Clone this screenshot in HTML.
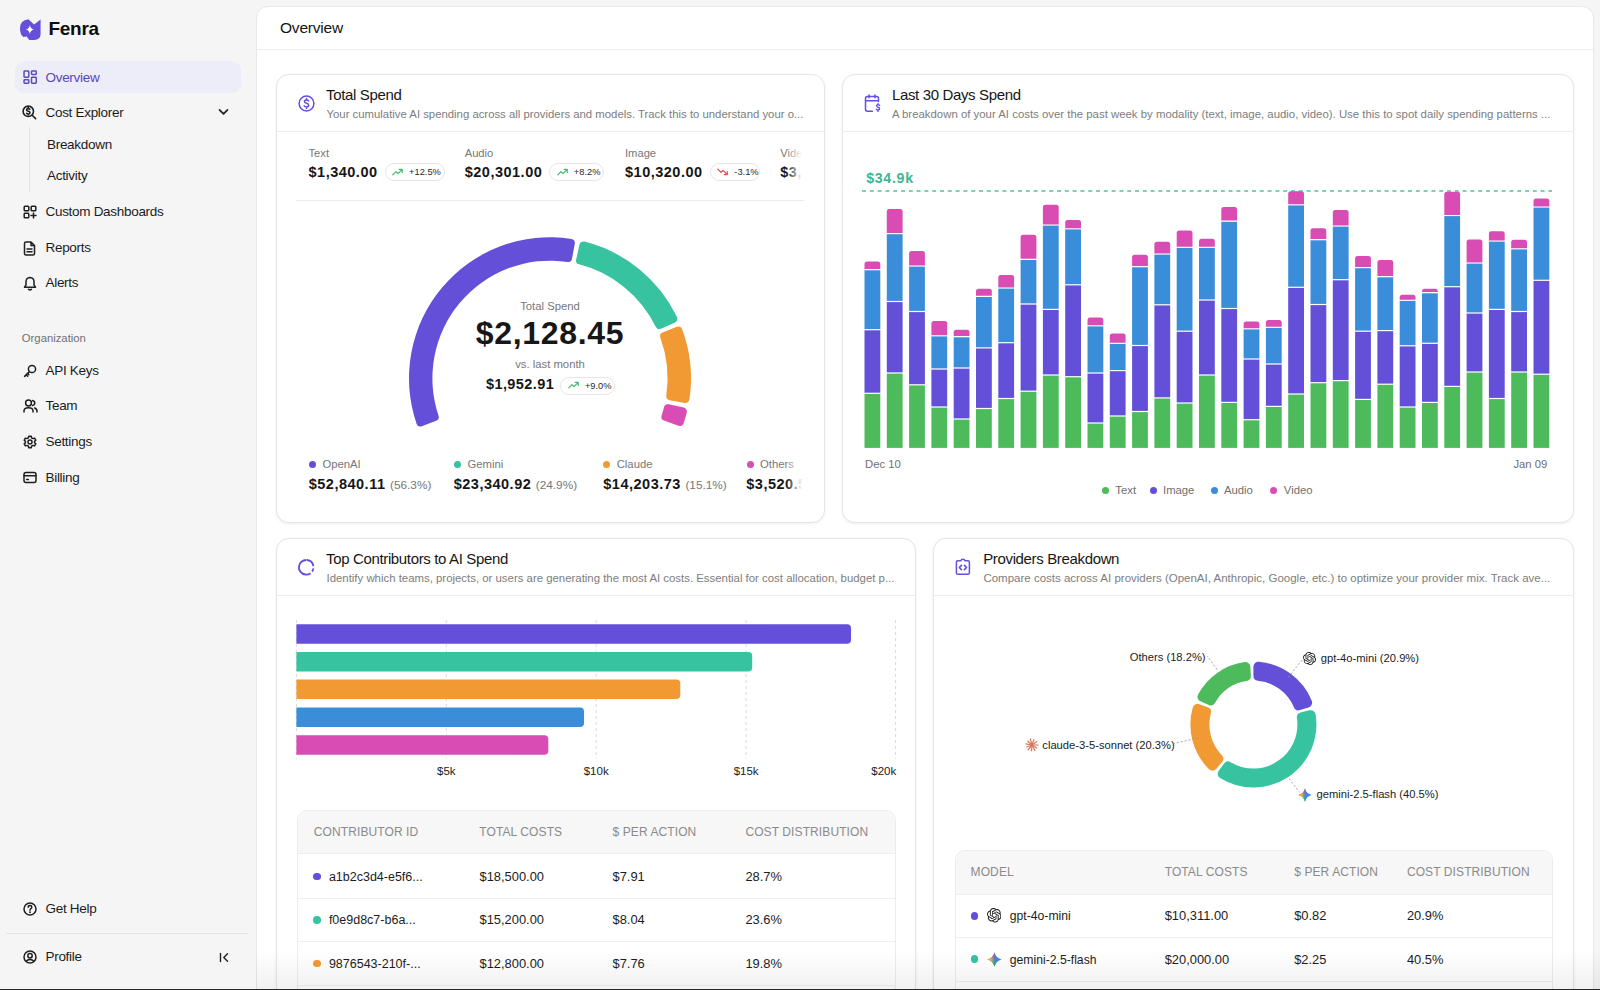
<!DOCTYPE html>
<html><head><meta charset="utf-8">
<style>
*{box-sizing:border-box;margin:0;padding:0}
html,body{width:1600px;height:990px;overflow:hidden;background:#f5f5f5;font-family:"Liberation Sans",sans-serif;color:#1a1a1a}
.a{position:absolute;white-space:nowrap}
svg.i{position:absolute;fill:none;stroke:#1f1f1f;stroke-width:1.6;stroke-linecap:round;stroke-linejoin:round}
.nav{position:absolute;left:45.5px;font-size:13.5px;letter-spacing:-0.3px;line-height:16px;color:#1c1c1c;white-space:nowrap}
#main{position:absolute;left:256px;top:6px;width:1338px;height:1000px;background:#fff;border:1px solid #e9e9e9;border-radius:12px;overflow:hidden}
.card{position:absolute;background:#fff;border:1px solid #e6e6e6;border-radius:13px;box-shadow:0 1px 3px rgba(0,0,0,.07);overflow:hidden}
.hd{position:absolute;left:0;right:0;top:0;border-bottom:1px solid #ececec}
.ttl{position:absolute;font-size:15px;letter-spacing:-0.35px;line-height:18px;color:#161616;white-space:nowrap}
.dsc{position:absolute;font-size:11.3px;letter-spacing:0px;line-height:14px;color:#7a7a7a;white-space:nowrap}
</style></head><body>

<div class="a" style="left:256px;top:6px;width:1338px;height:1000px;background:#fff;border:1px solid #e8e8e8;border-radius:12px"></div>
<div class="a" style="left:257px;top:49px;width:1336px;height:1px;background:#ebebeb"></div>
<div class="a" style="left:280px;top:17.83px;font-size:15.5px;line-height:20px;color:#141414;font-weight:400;letter-spacing:-0.2px;">Overview</div>
<div class="card" style="left:276px;top:74px;width:548.5px;height:448.5px"></div>
<div class="a" style="left:277px;top:131px;width:546.5px;height:1px;background:#ececec"></div>
<svg class="i" style="left:297.5px;top:94.5px;stroke:#6450d8;stroke-width:1.5" width="17" height="17" viewBox="0 0 17 17"><circle cx="8.5" cy="8.5" r="7.4"/><path d="M10.6 5.9 Q10 5 8.5 5 Q6.4 5 6.4 6.6 Q6.4 7.8 8.5 8.3 Q10.7 8.8 10.7 10.2 Q10.7 11.9 8.5 11.9 Q7 11.9 6.2 10.9 M8.5 3.6 V5 M8.5 11.9 V13.4"/></svg>
<div class="a" style="left:326px;top:85.20px;font-size:15px;line-height:20px;color:#161616;font-weight:400;letter-spacing:-0.35px;">Total Spend</div>
<div class="a" style="left:326.5px;top:107.37px;font-size:11.35px;line-height:15px;color:#7d7d7d;font-weight:400;letter-spacing:0px;">Your cumulative AI spending across all providers and models. Track this to understand your o...</div>
<div class="a" style="left:296px;top:140px;width:508px;height:55px;overflow:hidden">
<div class="a" style="left:12.5px;top:6.02px;font-size:11.2px;line-height:15px;color:#777;font-weight:400;letter-spacing:0px;">Text</div>
<div class="a" style="left:12.5px;top:22.98px;font-size:14.5px;line-height:19px;color:#161616;font-weight:700;letter-spacing:0.5px;">$1,340.00</div>
<div class="a" style="left:88.60000000000002px;top:23.400000000000006px;width:60px;height:18px;border:1px solid #e6e6e6;border-radius:9.0px"></div>
<svg class="i" style="left:96.10000000000002px;top:28.100000000000005px;stroke:#3fba6a;stroke-width:1.2" width="11" height="8" viewBox="0 0 11 8"><path d="M0.8 6.8 L4 3.6 L6 5.6 L10 1.6 M7.2 1.4 H10.2 V4.4"/></svg><div class="a" style="left:113.10000000000002px;top:26.48px;font-size:9.3px;line-height:12px;color:#2a2a2a;font-weight:400;letter-spacing:0px;">+12.5%</div>
<div class="a" style="left:168.7px;top:6.02px;font-size:11.2px;line-height:15px;color:#777;font-weight:400;letter-spacing:0px;">Audio</div>
<div class="a" style="left:168.7px;top:22.98px;font-size:14.5px;line-height:19px;color:#161616;font-weight:700;letter-spacing:0.5px;">$20,301.00</div>
<div class="a" style="left:253.29999999999995px;top:23.400000000000006px;width:55px;height:18px;border:1px solid #e6e6e6;border-radius:9.0px"></div>
<svg class="i" style="left:260.79999999999995px;top:28.100000000000005px;stroke:#3fba6a;stroke-width:1.2" width="11" height="8" viewBox="0 0 11 8"><path d="M0.8 6.8 L4 3.6 L6 5.6 L10 1.6 M7.2 1.4 H10.2 V4.4"/></svg><div class="a" style="left:277.79999999999995px;top:26.48px;font-size:9.3px;line-height:12px;color:#2a2a2a;font-weight:400;letter-spacing:0px;">+8.2%</div>
<div class="a" style="left:329px;top:6.02px;font-size:11.2px;line-height:15px;color:#777;font-weight:400;letter-spacing:0px;">Image</div>
<div class="a" style="left:329px;top:22.98px;font-size:14.5px;line-height:19px;color:#161616;font-weight:700;letter-spacing:0.5px;">$10,320.00</div>
<div class="a" style="left:413.79999999999995px;top:23.400000000000006px;width:50.5px;height:18px;border:1px solid #e6e6e6;border-radius:9.0px"></div>
<svg class="i" style="left:421.29999999999995px;top:28.100000000000005px;stroke:#e0474c;stroke-width:1.2" width="11" height="8" viewBox="0 0 11 8"><path d="M0.8 1.2 L4 4.4 L6 2.4 L10 6.4 M7.2 6.6 H10.2 V3.6"/></svg><div class="a" style="left:438.29999999999995px;top:26.48px;font-size:9.3px;line-height:12px;color:#2a2a2a;font-weight:400;letter-spacing:0px;">-3.1%</div>
<div class="a" style="left:484.29999999999995px;top:6.02px;font-size:11.2px;line-height:15px;color:#777;font-weight:400;letter-spacing:0px;">Video</div>
<div class="a" style="left:484.29999999999995px;top:22.98px;font-size:14.5px;line-height:19px;color:#161616;font-weight:700;letter-spacing:0.5px;">$3,120.00</div>
<div class="a" style="left:564px;top:23.400000000000006px;width:55px;height:18px;border:1px solid #e6e6e6;border-radius:9.0px"></div>
<svg class="i" style="left:571.5px;top:28.100000000000005px;stroke:#3fba6a;stroke-width:1.2" width="11" height="8" viewBox="0 0 11 8"><path d="M0.8 6.8 L4 3.6 L6 5.6 L10 1.6 M7.2 1.4 H10.2 V4.4"/></svg><div class="a" style="left:588.5px;top:26.48px;font-size:9.3px;line-height:12px;color:#2a2a2a;font-weight:400;letter-spacing:0px;">+4.0%</div>
<div class="a" style="left:490px;top:0;width:18px;height:55px;background:linear-gradient(90deg,rgba(255,255,255,0),#fff 90%)"></div>
</div>
<div class="a" style="left:296px;top:200px;width:508px;height:1px;background:#ebebeb"></div>
<svg class="a" style="left:0;top:0" width="1600" height="990"><path fill="#6450d8" d="M421.73,426.26 A4,4,0,0,1,416.54,423.80 A141,141,0,0,1,571.47,238.94 A4,4,0,0,1,574.80,243.62 L572.01,258.77 A4,4,0,0,1,567.48,262.01 A117.6,117.6,0,0,0,438.55,415.84 A4,4,0,0,1,436.16,420.86Z"/><path fill="#37c39f" d="M579.48,244.57 A4,4,0,0,1,584.36,241.55 A141,141,0,0,1,676.99,317.03 A4,4,0,0,1,675.02,322.42 L660.96,328.71 A4,4,0,0,1,655.73,326.81 A117.6,117.6,0,0,0,579.08,264.35 A4,4,0,0,1,576.16,259.62Z"/><path fill="#f19a34" d="M676.90,326.82 A4,4,0,0,1,682.15,329.13 A141,141,0,0,1,689.39,399.58 A4,4,0,0,1,684.71,402.91 L669.56,400.14 A4,4,0,0,1,666.32,395.62 A117.6,117.6,0,0,0,660.37,337.70 A4,4,0,0,1,662.62,332.61Z"/><path fill="#d94cb3" d="M683.77,407.60 A4,4,0,0,1,686.80,412.47 A141,141,0,0,1,683.61,423.34 A4,4,0,0,1,678.44,425.81 L663.99,420.46 A4,4,0,0,1,661.58,415.45 A117.6,117.6,0,0,0,663.99,407.22 A4,4,0,0,1,668.72,404.30Z"/></svg>
<div class="a" style="left:350px;width:400px;text-align:center;top:299.18px;font-size:11.3px;line-height:15px;color:#777;font-weight:400;letter-spacing:0px;">Total Spend</div>
<div class="a" style="left:350px;width:400px;text-align:center;top:312.41px;font-size:32px;line-height:42px;color:#171717;font-weight:700;letter-spacing:0.7px;">$2,128.45</div>
<div class="a" style="left:350px;width:400px;text-align:center;top:356.88px;font-size:11.3px;line-height:15px;color:#777;font-weight:400;letter-spacing:0px;">vs. last month</div>
<div class="a" style="left:486px;top:375.38px;font-size:14.5px;line-height:19px;color:#161616;font-weight:700;letter-spacing:0.4px;">$1,952.91</div>
<div class="a" style="left:560.4px;top:376.7px;width:54.5px;height:18px;border:1px solid #e6e6e6;border-radius:9.0px"></div>
<svg class="i" style="left:567.9px;top:381.4px;stroke:#3fba6a;stroke-width:1.2" width="11" height="8" viewBox="0 0 11 8"><path d="M0.8 6.8 L4 3.6 L6 5.6 L10 1.6 M7.2 1.4 H10.2 V4.4"/></svg><div class="a" style="left:584.9px;top:379.78px;font-size:9.3px;line-height:12px;color:#2a2a2a;font-weight:400;letter-spacing:0px;">+9.0%</div>
<div class="a" style="left:296px;top:450px;width:508px;height:50px;overflow:hidden"><div class="a" style="left:-296px;top:-450px;width:1600px;height:990px">
<div class="a" style="left:308.6px;top:461.3px;width:7px;height:7px;border-radius:50%;background:#6450d8"></div>
<div class="a" style="left:322.4px;top:457.38px;font-size:11.3px;line-height:15px;color:#777;font-weight:400;letter-spacing:0px;">OpenAI</div>
<div class="a" style="left:308.7px;top:475.28px;font-size:14.5px;line-height:19px;color:#161616;font-weight:700;letter-spacing:0.5px;">$52,840.11 <span style="font-weight:400;font-size:11.8px;letter-spacing:0;color:#777">(56.3%)</span></div>
<div class="a" style="left:453.7px;top:461.3px;width:7px;height:7px;border-radius:50%;background:#37c39f"></div>
<div class="a" style="left:467.5px;top:457.38px;font-size:11.3px;line-height:15px;color:#777;font-weight:400;letter-spacing:0px;">Gemini</div>
<div class="a" style="left:453.7px;top:475.28px;font-size:14.5px;line-height:19px;color:#161616;font-weight:700;letter-spacing:0.5px;">$23,340.92 <span style="font-weight:400;font-size:11.8px;letter-spacing:0;color:#777">(24.9%)</span></div>
<div class="a" style="left:603.2px;top:461.3px;width:7px;height:7px;border-radius:50%;background:#f19a34"></div>
<div class="a" style="left:616.7px;top:457.38px;font-size:11.3px;line-height:15px;color:#777;font-weight:400;letter-spacing:0px;">Claude</div>
<div class="a" style="left:603.3px;top:475.28px;font-size:14.5px;line-height:19px;color:#161616;font-weight:700;letter-spacing:0.5px;">$14,203.73 <span style="font-weight:400;font-size:11.8px;letter-spacing:0;color:#777">(15.1%)</span></div>
<div class="a" style="left:746.9px;top:461.3px;width:7px;height:7px;border-radius:50%;background:#d94cb3"></div>
<div class="a" style="left:760px;top:457.38px;font-size:11.3px;line-height:15px;color:#777;font-weight:400;letter-spacing:0px;">Others</div>
<div class="a" style="left:746.3px;top:475.28px;font-size:14.5px;line-height:19px;color:#161616;font-weight:700;letter-spacing:0.5px;">$3,520.55 <span style="font-weight:400;font-size:11.8px;letter-spacing:0;color:#777">(3.7%)</span></div>
</div><div class="a" style="left:490px;top:0;width:18px;height:50px;background:linear-gradient(90deg,rgba(255,255,255,0),#fff 90%)"></div></div>
<div class="card" style="left:842px;top:74px;width:732px;height:448.5px"></div>
<div class="a" style="left:843px;top:131px;width:730px;height:1px;background:#ececec"></div>
<svg class="i" style="left:863.5px;top:93.5px;stroke:#6450d8;stroke-width:1.5" width="18" height="19" viewBox="0 0 18 19"><path d="M14.5 7.5 V4.5 Q14.5 2.6 12.6 2.6 H3.4 Q1.5 2.6 1.5 4.5 V15.3 Q1.5 17.2 3.4 17.2 H8.4 M1.5 6.8 H13.4 M5 1 V3.8 M11 1 V3.8"/><path d="M15.6 11.6 Q15.2 10.6 14 10.6 Q12.6 10.6 12.6 11.8 Q12.6 12.8 14 13.2 Q15.6 13.6 15.6 14.8 Q15.6 16 14 16 Q12.8 16 12.4 15.2 M14 9.6 V10.6 M14 16 V17.4" stroke-width="1.4"/></svg>
<div class="a" style="left:891.9px;top:85.20px;font-size:15px;line-height:20px;color:#161616;font-weight:400;letter-spacing:-0.35px;">Last 30 Days Spend</div>
<div class="a" style="left:891.9px;top:107.35px;font-size:11.4px;line-height:15px;color:#7d7d7d;font-weight:400;letter-spacing:0px;">A breakdown of your AI costs over the past week by modality (text, image, audio, video). Use this to spot daily spending patterns ...</div>
<div class="a" style="left:866.2px;top:168.98px;font-size:14.2px;line-height:18px;color:#3bb88f;font-weight:700;letter-spacing:0.7px;">$34.9k</div>
<svg class="a" style="left:0;top:0" width="1600" height="990"><line x1="862" y1="191.1" x2="1552" y2="191.1" stroke="#4fc59e" stroke-width="1.5" stroke-dasharray="4 3.8"/></svg>
<svg class="a" style="left:0;top:0" width="1600" height="990"><rect x="864.5" y="393.9" width="15.8" height="54.0" fill="#4dbb5b"/><rect x="864.5" y="330.3" width="15.8" height="62.4" fill="#6450d8"/><rect x="864.5" y="270.3" width="15.8" height="58.8" fill="#3a8dd8"/><path fill="#d94cb3" d="M864.5,269.1 V264.0 Q864.5,261.5 867.0,261.5 H877.8 Q880.3,261.5 880.3,264.0 V269.1 Z"/><rect x="886.8" y="373.6" width="15.8" height="74.3" fill="#4dbb5b"/><rect x="886.8" y="302.1" width="15.8" height="70.3" fill="#6450d8"/><rect x="886.8" y="234.2" width="15.8" height="66.7" fill="#3a8dd8"/><path fill="#d94cb3" d="M886.8,233.0 V211.4 Q886.8,208.9 889.3,208.9 H900.1 Q902.6,208.9 902.6,211.4 V233.0 Z"/><rect x="909.1" y="385.4" width="15.8" height="62.5" fill="#4dbb5b"/><rect x="909.1" y="312.1" width="15.8" height="72.1" fill="#6450d8"/><rect x="909.1" y="266.6" width="15.8" height="44.3" fill="#3a8dd8"/><path fill="#d94cb3" d="M909.1,265.4 V253.5 Q909.1,251.0 911.6,251.0 H922.4 Q924.9,251.0 924.9,253.5 V265.4 Z"/><rect x="931.4" y="407.6" width="15.8" height="40.3" fill="#4dbb5b"/><rect x="931.4" y="369.6" width="15.8" height="36.8" fill="#6450d8"/><rect x="931.4" y="336.4" width="15.8" height="32.0" fill="#3a8dd8"/><path fill="#d94cb3" d="M931.4,335.2 V323.5 Q931.4,321.0 933.9,321.0 H944.7 Q947.2,321.0 947.2,323.5 V335.2 Z"/><rect x="953.7" y="419.6" width="15.8" height="28.3" fill="#4dbb5b"/><rect x="953.7" y="368.6" width="15.8" height="49.8" fill="#6450d8"/><rect x="953.7" y="337.3" width="15.8" height="30.1" fill="#3a8dd8"/><path fill="#d94cb3" d="M953.7,336.1 V332.2 Q953.7,329.7 956.2,329.7 H967.0 Q969.5,329.7 969.5,332.2 V336.1 Z"/><rect x="976.0" y="409.1" width="15.8" height="38.8" fill="#4dbb5b"/><rect x="976.0" y="348.5" width="15.8" height="59.4" fill="#6450d8"/><rect x="976.0" y="297.0" width="15.8" height="50.3" fill="#3a8dd8"/><path fill="#d94cb3" d="M976.0,295.8 V291.3 Q976.0,288.8 978.5,288.8 H989.3 Q991.8,288.8 991.8,291.3 V295.8 Z"/><rect x="998.3" y="399.1" width="15.8" height="48.8" fill="#4dbb5b"/><rect x="998.3" y="343.3" width="15.8" height="54.6" fill="#6450d8"/><rect x="998.3" y="288.6" width="15.8" height="53.5" fill="#3a8dd8"/><path fill="#d94cb3" d="M998.3,287.4 V277.5 Q998.3,275.0 1000.8,275.0 H1011.6 Q1014.1,275.0 1014.1,277.5 V287.4 Z"/><rect x="1020.6" y="391.8" width="15.8" height="56.1" fill="#4dbb5b"/><rect x="1020.6" y="304.6" width="15.8" height="86.0" fill="#6450d8"/><rect x="1020.6" y="260.0" width="15.8" height="43.4" fill="#3a8dd8"/><path fill="#d94cb3" d="M1020.6,258.8 V237.3 Q1020.6,234.8 1023.1,234.8 H1033.9 Q1036.4,234.8 1036.4,237.3 V258.8 Z"/><rect x="1042.9" y="375.6" width="15.8" height="72.3" fill="#4dbb5b"/><rect x="1042.9" y="310.0" width="15.8" height="64.4" fill="#6450d8"/><rect x="1042.9" y="225.6" width="15.8" height="83.2" fill="#3a8dd8"/><path fill="#d94cb3" d="M1042.9,224.4 V207.3 Q1042.9,204.8 1045.4,204.8 H1056.2 Q1058.7,204.8 1058.7,207.3 V224.4 Z"/><rect x="1065.2" y="377.3" width="15.8" height="70.6" fill="#4dbb5b"/><rect x="1065.2" y="285.4" width="15.8" height="90.7" fill="#6450d8"/><rect x="1065.2" y="229.4" width="15.8" height="54.8" fill="#3a8dd8"/><path fill="#d94cb3" d="M1065.2,228.2 V222.5 Q1065.2,220.0 1067.7,220.0 H1078.5 Q1081.0,220.0 1081.0,222.5 V228.2 Z"/><rect x="1087.5" y="423.6" width="15.8" height="24.3" fill="#4dbb5b"/><rect x="1087.5" y="373.6" width="15.8" height="48.8" fill="#6450d8"/><rect x="1087.5" y="326.4" width="15.8" height="46.0" fill="#3a8dd8"/><path fill="#d94cb3" d="M1087.5,325.2 V320.1 Q1087.5,317.6 1090.0,317.6 H1100.8 Q1103.3,317.6 1103.3,320.1 V325.2 Z"/><rect x="1109.8" y="416.6" width="15.8" height="31.3" fill="#4dbb5b"/><rect x="1109.8" y="371.2" width="15.8" height="44.2" fill="#6450d8"/><rect x="1109.8" y="343.9" width="15.8" height="26.1" fill="#3a8dd8"/><path fill="#d94cb3" d="M1109.8,342.7 V336.1 Q1109.8,333.6 1112.3,333.6 H1123.1 Q1125.6,333.6 1125.6,336.1 V342.7 Z"/><rect x="1132.1" y="412.1" width="15.8" height="35.8" fill="#4dbb5b"/><rect x="1132.1" y="346.1" width="15.8" height="64.8" fill="#6450d8"/><rect x="1132.1" y="267.3" width="15.8" height="77.6" fill="#3a8dd8"/><path fill="#d94cb3" d="M1132.1,266.1 V257.3 Q1132.1,254.8 1134.6,254.8 H1145.4 Q1147.9,254.8 1147.9,257.3 V266.1 Z"/><rect x="1154.4" y="398.5" width="15.8" height="49.4" fill="#4dbb5b"/><rect x="1154.4" y="305.4" width="15.8" height="91.9" fill="#6450d8"/><rect x="1154.4" y="254.6" width="15.8" height="49.6" fill="#3a8dd8"/><path fill="#d94cb3" d="M1154.4,253.4 V244.3 Q1154.4,241.8 1156.9,241.8 H1167.7 Q1170.2,241.8 1170.2,244.3 V253.4 Z"/><rect x="1176.7" y="403.6" width="15.8" height="44.3" fill="#4dbb5b"/><rect x="1176.7" y="331.8" width="15.8" height="70.6" fill="#6450d8"/><rect x="1176.7" y="247.9" width="15.8" height="82.7" fill="#3a8dd8"/><path fill="#d94cb3" d="M1176.7,246.7 V233.1 Q1176.7,230.6 1179.2,230.6 H1190.0 Q1192.5,230.6 1192.5,233.1 V246.7 Z"/><rect x="1199.0" y="375.6" width="15.8" height="72.3" fill="#4dbb5b"/><rect x="1199.0" y="300.6" width="15.8" height="73.8" fill="#6450d8"/><rect x="1199.0" y="247.9" width="15.8" height="51.5" fill="#3a8dd8"/><path fill="#d94cb3" d="M1199.0,246.7 V241.3 Q1199.0,238.8 1201.5,238.8 H1212.3 Q1214.8,238.8 1214.8,241.3 V246.7 Z"/><rect x="1221.3" y="403.0" width="15.8" height="44.9" fill="#4dbb5b"/><rect x="1221.3" y="309.1" width="15.8" height="92.7" fill="#6450d8"/><rect x="1221.3" y="221.8" width="15.8" height="86.1" fill="#3a8dd8"/><path fill="#d94cb3" d="M1221.3,220.6 V209.5 Q1221.3,207.0 1223.8,207.0 H1234.6 Q1237.1,207.0 1237.1,209.5 V220.6 Z"/><rect x="1243.6" y="420.3" width="15.8" height="27.6" fill="#4dbb5b"/><rect x="1243.6" y="359.6" width="15.8" height="59.5" fill="#6450d8"/><rect x="1243.6" y="329.4" width="15.8" height="29.0" fill="#3a8dd8"/><path fill="#d94cb3" d="M1243.6,328.2 V324.0 Q1243.6,321.5 1246.1,321.5 H1256.9 Q1259.4,321.5 1259.4,324.0 V328.2 Z"/><rect x="1265.9" y="407.0" width="15.8" height="40.9" fill="#4dbb5b"/><rect x="1265.9" y="364.6" width="15.8" height="41.2" fill="#6450d8"/><rect x="1265.9" y="327.9" width="15.8" height="35.5" fill="#3a8dd8"/><path fill="#d94cb3" d="M1265.9,326.7 V322.5 Q1265.9,320.0 1268.4,320.0 H1279.2 Q1281.7,320.0 1281.7,322.5 V326.7 Z"/><rect x="1288.2" y="394.6" width="15.8" height="53.3" fill="#4dbb5b"/><rect x="1288.2" y="287.9" width="15.8" height="105.5" fill="#6450d8"/><rect x="1288.2" y="205.4" width="15.8" height="81.3" fill="#3a8dd8"/><path fill="#d94cb3" d="M1288.2,204.2 V193.7 Q1288.2,191.2 1290.7,191.2 H1301.5 Q1304.0,191.2 1304.0,193.7 V204.2 Z"/><rect x="1310.5" y="383.3" width="15.8" height="64.6" fill="#4dbb5b"/><rect x="1310.5" y="305.1" width="15.8" height="77.0" fill="#6450d8"/><rect x="1310.5" y="240.3" width="15.8" height="63.6" fill="#3a8dd8"/><path fill="#d94cb3" d="M1310.5,239.1 V230.7 Q1310.5,228.2 1313.0,228.2 H1323.8 Q1326.3,228.2 1326.3,230.7 V239.1 Z"/><rect x="1332.8" y="381.2" width="15.8" height="66.7" fill="#4dbb5b"/><rect x="1332.8" y="280.3" width="15.8" height="99.7" fill="#6450d8"/><rect x="1332.8" y="226.6" width="15.8" height="52.5" fill="#3a8dd8"/><path fill="#d94cb3" d="M1332.8,225.4 V212.5 Q1332.8,210.0 1335.3,210.0 H1346.1 Q1348.6,210.0 1348.6,212.5 V225.4 Z"/><rect x="1355.1" y="400.0" width="15.8" height="47.9" fill="#4dbb5b"/><rect x="1355.1" y="331.8" width="15.8" height="67.0" fill="#6450d8"/><rect x="1355.1" y="268.2" width="15.8" height="62.4" fill="#3a8dd8"/><path fill="#d94cb3" d="M1355.1,267.0 V258.5 Q1355.1,256.0 1357.6,256.0 H1368.4 Q1370.9,256.0 1370.9,258.5 V267.0 Z"/><rect x="1377.4" y="384.8" width="15.8" height="63.1" fill="#4dbb5b"/><rect x="1377.4" y="331.2" width="15.8" height="52.4" fill="#6450d8"/><rect x="1377.4" y="277.3" width="15.8" height="52.7" fill="#3a8dd8"/><path fill="#d94cb3" d="M1377.4,276.1 V262.5 Q1377.4,260.0 1379.9,260.0 H1390.7 Q1393.2,260.0 1393.2,262.5 V276.1 Z"/><rect x="1399.7" y="407.6" width="15.8" height="40.3" fill="#4dbb5b"/><rect x="1399.7" y="346.4" width="15.8" height="60.0" fill="#6450d8"/><rect x="1399.7" y="300.9" width="15.8" height="44.3" fill="#3a8dd8"/><path fill="#d94cb3" d="M1399.7,299.7 V297.3 Q1399.7,294.8 1402.2,294.8 H1413.0 Q1415.5,294.8 1415.5,297.3 V299.7 Z"/><rect x="1422.0" y="403.0" width="15.8" height="44.9" fill="#4dbb5b"/><rect x="1422.0" y="343.9" width="15.8" height="57.9" fill="#6450d8"/><rect x="1422.0" y="293.3" width="15.8" height="49.4" fill="#3a8dd8"/><path fill="#d94cb3" d="M1422.0,292.1 V291.3 Q1422.0,288.8 1424.5,288.8 H1435.3 Q1437.8,288.8 1437.8,291.3 V292.1 Z"/><rect x="1444.3" y="387.0" width="15.8" height="60.9" fill="#4dbb5b"/><rect x="1444.3" y="287.3" width="15.8" height="98.5" fill="#6450d8"/><rect x="1444.3" y="216.1" width="15.8" height="70.0" fill="#3a8dd8"/><path fill="#d94cb3" d="M1444.3,214.9 V194.3 Q1444.3,191.8 1446.8,191.8 H1457.6 Q1460.1,191.8 1460.1,194.3 V214.9 Z"/><rect x="1466.6" y="372.6" width="15.8" height="75.3" fill="#4dbb5b"/><rect x="1466.6" y="313.6" width="15.8" height="57.8" fill="#6450d8"/><rect x="1466.6" y="263.6" width="15.8" height="48.8" fill="#3a8dd8"/><path fill="#d94cb3" d="M1466.6,262.4 V241.9 Q1466.6,239.4 1469.1,239.4 H1479.9 Q1482.4,239.4 1482.4,241.9 V262.4 Z"/><rect x="1488.9" y="399.1" width="15.8" height="48.8" fill="#4dbb5b"/><rect x="1488.9" y="310.0" width="15.8" height="87.9" fill="#6450d8"/><rect x="1488.9" y="241.6" width="15.8" height="67.2" fill="#3a8dd8"/><path fill="#d94cb3" d="M1488.9,240.4 V233.7 Q1488.9,231.2 1491.4,231.2 H1502.2 Q1504.7,231.2 1504.7,233.7 V240.4 Z"/><rect x="1511.2" y="372.6" width="15.8" height="75.3" fill="#4dbb5b"/><rect x="1511.2" y="312.1" width="15.8" height="59.3" fill="#6450d8"/><rect x="1511.2" y="249.4" width="15.8" height="61.5" fill="#3a8dd8"/><path fill="#d94cb3" d="M1511.2,248.2 V242.2 Q1511.2,239.7 1513.7,239.7 H1524.5 Q1527.0,239.7 1527.0,242.2 V248.2 Z"/><rect x="1533.5" y="374.8" width="15.8" height="73.1" fill="#4dbb5b"/><rect x="1533.5" y="280.9" width="15.8" height="92.7" fill="#6450d8"/><rect x="1533.5" y="207.6" width="15.8" height="72.1" fill="#3a8dd8"/><path fill="#d94cb3" d="M1533.5,206.4 V201.0 Q1533.5,198.5 1536.0,198.5 H1546.8 Q1549.3,198.5 1549.3,201.0 V206.4 Z"/></svg>
<div class="a" style="left:865px;top:456.88px;font-size:11.3px;line-height:15px;color:#6f6f6f;font-weight:400;letter-spacing:0px;">Dec 10</div>
<div class="a" style="left:1447.3px;width:100px;text-align:right;top:457.38px;font-size:11.3px;line-height:14px;color:#6f6f6f">Jan 09</div>
<div class="a" style="left:1102.2px;top:486.7px;width:7px;height:7px;border-radius:50%;background:#4dbb5b"></div>
<div class="a" style="left:1115.3px;top:482.88px;font-size:11.3px;line-height:15px;color:#6f6f6f;font-weight:400;letter-spacing:0px;">Text</div>
<div class="a" style="left:1149.7px;top:486.7px;width:7px;height:7px;border-radius:50%;background:#6450d8"></div>
<div class="a" style="left:1163px;top:482.88px;font-size:11.3px;line-height:15px;color:#6f6f6f;font-weight:400;letter-spacing:0px;">Image</div>
<div class="a" style="left:1210.5px;top:486.7px;width:7px;height:7px;border-radius:50%;background:#3a8dd8"></div>
<div class="a" style="left:1224px;top:482.88px;font-size:11.3px;line-height:15px;color:#6f6f6f;font-weight:400;letter-spacing:0px;">Audio</div>
<div class="a" style="left:1270.2px;top:486.7px;width:7px;height:7px;border-radius:50%;background:#d94cb3"></div>
<div class="a" style="left:1283.8px;top:482.88px;font-size:11.3px;line-height:15px;color:#6f6f6f;font-weight:400;letter-spacing:0px;">Video</div>
<div class="card" style="left:276px;top:538px;width:640px;height:520px"></div>
<div class="a" style="left:277px;top:595px;width:638px;height:1px;background:#ececec"></div>
<svg class="i" style="left:297px;top:557.5px;stroke:#6450d8;stroke-width:1.9;stroke-linecap:butt" width="18" height="18" viewBox="0 0 18 18"><circle cx="9.2" cy="9.3" r="7.3" stroke-dasharray="9.4 2.4 3.4 2.2 27.7 1.4" transform="rotate(-84 9.2 9.3)"/></svg>
<div class="a" style="left:326px;top:549.20px;font-size:15px;line-height:20px;color:#161616;font-weight:400;letter-spacing:-0.35px;">Top Contributors to AI Spend</div>
<div class="a" style="left:326.5px;top:571.35px;font-size:11.4px;line-height:15px;color:#7d7d7d;font-weight:400;letter-spacing:0px;">Identify which teams, projects, or users are generating the most AI costs. Essential for cost allocation, budget p...</div>
<svg class="a" style="left:0;top:0" width="1600" height="990"><line x1="296.4" y1="620" x2="296.4" y2="759" stroke="#d9d9d9" stroke-width="1" stroke-dasharray="3 3"/><line x1="446.3" y1="620" x2="446.3" y2="759" stroke="#d9d9d9" stroke-width="1" stroke-dasharray="3 3"/><line x1="596.2" y1="620" x2="596.2" y2="759" stroke="#d9d9d9" stroke-width="1" stroke-dasharray="3 3"/><line x1="746.1" y1="620" x2="746.1" y2="759" stroke="#d9d9d9" stroke-width="1" stroke-dasharray="3 3"/><line x1="895.6" y1="620" x2="895.6" y2="759" stroke="#d9d9d9" stroke-width="1" stroke-dasharray="3 3"/><path fill="#6450d8" d="M296.4,624.3 H847 Q851,624.3 851,628.3 V639.7 Q851,643.7 847,643.7 H296.4 Z"/><path fill="#37c39f" d="M296.4,651.9 H748.2 Q752.2,651.9 752.2,655.9 V667.4 Q752.2,671.4 748.2,671.4 H296.4 Z"/><path fill="#f19a34" d="M296.4,679.5 H676.3 Q680.3,679.5 680.3,683.5 V695 Q680.3,699 676.3,699 H296.4 Z"/><path fill="#3a8dd8" d="M296.4,707.5 H580 Q584,707.5 584,711.5 V723 Q584,727 580,727 H296.4 Z"/><path fill="#d94cb3" d="M296.4,735.2 H544.3 Q548.3,735.2 548.3,739.2 V750.7 Q548.3,754.7 544.3,754.7 H296.4 Z"/></svg>
<div class="a" style="left:246.3px;width:400px;text-align:center;top:764.32px;font-size:11.5px;line-height:15px;color:#222;font-weight:400;letter-spacing:0px;">$5k</div>
<div class="a" style="left:396.20000000000005px;width:400px;text-align:center;top:764.32px;font-size:11.5px;line-height:15px;color:#222;font-weight:400;letter-spacing:0px;">$10k</div>
<div class="a" style="left:546.1px;width:400px;text-align:center;top:764.32px;font-size:11.5px;line-height:15px;color:#222;font-weight:400;letter-spacing:0px;">$15k</div>
<div class="a" style="left:683.8px;width:400px;text-align:center;top:764.32px;font-size:11.5px;line-height:15px;color:#222;font-weight:400;letter-spacing:0px;">$20k</div>
<div class="a" style="left:297.2px;top:810.3px;width:598.4000000000001px;height:289.70000000000005px;border:1px solid #ececec;border-radius:10px;overflow:hidden"><div class="a" style="left:0;top:0;right:0;height:42.90000000000009px;background:#f7f7f7;border-bottom:1px solid #efefef"></div></div>
<div class="a" style="left:298.2px;top:897.6px;width:596.4000000000001px;height:1px;background:#efefef"></div>
<div class="a" style="left:298.2px;top:941px;width:596.4000000000001px;height:1px;background:#efefef"></div>
<div class="a" style="left:298.2px;top:985.3px;width:596.4000000000001px;height:1px;background:#efefef"></div>
<div class="a" style="left:313.8px;top:824.44px;font-size:12px;line-height:16px;color:#8a8a8a;font-weight:400;letter-spacing:0.1px;">CONTRIBUTOR ID</div>
<div class="a" style="left:479.3px;top:824.44px;font-size:12px;line-height:16px;color:#8a8a8a;font-weight:400;letter-spacing:0.1px;">TOTAL COSTS</div>
<div class="a" style="left:612.5px;top:824.44px;font-size:12px;line-height:16px;color:#8a8a8a;font-weight:400;letter-spacing:0.1px;">$ PER ACTION</div>
<div class="a" style="left:745.4px;top:824.44px;font-size:12px;line-height:16px;color:#8a8a8a;font-weight:400;letter-spacing:0.1px;">COST DISTRIBUTION</div>
<div class="a" style="left:313.4px;top:872.5px;width:7.6px;height:7.6px;border-radius:50%;background:#6450d8"></div>
<div class="a" style="left:328.9px;top:868.57px;font-size:12.5px;line-height:16px;color:#1c1c1c;font-weight:400;letter-spacing:0px;">a1b2c3d4-e5f6...</div>
<div class="a" style="left:479.5px;top:867.93px;font-size:12.9px;line-height:17px;color:#1c1c1c;font-weight:400;letter-spacing:0px;">$18,500.00</div>
<div class="a" style="left:612.5px;top:867.93px;font-size:12.9px;line-height:17px;color:#1c1c1c;font-weight:400;letter-spacing:0px;">$7.91</div>
<div class="a" style="left:745.4px;top:867.93px;font-size:12.9px;line-height:17px;color:#1c1c1c;font-weight:400;letter-spacing:0px;">28.7%</div>
<div class="a" style="left:313.4px;top:916.0px;width:7.6px;height:7.6px;border-radius:50%;background:#37c39f"></div>
<div class="a" style="left:328.9px;top:912.07px;font-size:12.5px;line-height:16px;color:#1c1c1c;font-weight:400;letter-spacing:0px;">f0e9d8c7-b6a...</div>
<div class="a" style="left:479.5px;top:911.43px;font-size:12.9px;line-height:17px;color:#1c1c1c;font-weight:400;letter-spacing:0px;">$15,200.00</div>
<div class="a" style="left:612.5px;top:911.43px;font-size:12.9px;line-height:17px;color:#1c1c1c;font-weight:400;letter-spacing:0px;">$8.04</div>
<div class="a" style="left:745.4px;top:911.43px;font-size:12.9px;line-height:17px;color:#1c1c1c;font-weight:400;letter-spacing:0px;">23.6%</div>
<div class="a" style="left:313.4px;top:959.5px;width:7.6px;height:7.6px;border-radius:50%;background:#f19a34"></div>
<div class="a" style="left:328.9px;top:955.57px;font-size:12.5px;line-height:16px;color:#1c1c1c;font-weight:400;letter-spacing:0px;">9876543-210f-...</div>
<div class="a" style="left:479.5px;top:954.93px;font-size:12.9px;line-height:17px;color:#1c1c1c;font-weight:400;letter-spacing:0px;">$12,800.00</div>
<div class="a" style="left:612.5px;top:954.93px;font-size:12.9px;line-height:17px;color:#1c1c1c;font-weight:400;letter-spacing:0px;">$7.76</div>
<div class="a" style="left:745.4px;top:954.93px;font-size:12.9px;line-height:17px;color:#1c1c1c;font-weight:400;letter-spacing:0px;">19.8%</div>
<div class="card" style="left:933px;top:538px;width:641px;height:520px"></div>
<div class="a" style="left:934px;top:595px;width:639px;height:1px;background:#ececec"></div>
<svg class="i" style="left:954px;top:557.5px;stroke:#6450d8;stroke-width:1.5" width="18" height="18" viewBox="0 0 18 18"><path d="M6.8 2.7 H3.9 Q2.4 2.7 2.4 4.2 V15 Q2.4 16.3 3.9 16.3 H14 Q15.4 16.3 15.4 15 V4.2 Q15.4 2.7 14 2.7 H11 Q10.6 1.2 8.9 1.2 Q7.2 1.2 6.8 2.7 Z"/><path d="M7.4 7.4 L5.3 9.5 L7.4 11.6 M10.4 7.4 L12.5 9.5 L10.4 11.6" stroke-width="1.6"/></svg>
<div class="a" style="left:983.2px;top:549.20px;font-size:15px;line-height:20px;color:#161616;font-weight:400;letter-spacing:-0.35px;">Providers Breakdown</div>
<div class="a" style="left:983.4px;top:571.32px;font-size:11.5px;line-height:15px;color:#7d7d7d;font-weight:400;letter-spacing:0px;">Compare costs across AI providers (OpenAI, Anthropic, Google, etc.) to optimize your provider mix. Track ave...</div>
<svg class="a" style="left:0;top:0" width="1600" height="990"><path fill="#6450d8" d="M1253.40,666.72 A5,5,0,0,1,1258.83,661.73 A63,63,0,0,1,1311.75,700.76 A5,5,0,0,1,1308.60,707.42 L1299.97,710.09 A5,5,0,0,1,1293.89,707.27 A44,44,0,0,0,1257.89,680.73 A5,5,0,0,1,1253.40,675.76Z"/><path fill="#37c39f" d="M1309.42,710.33 A5,5,0,0,1,1315.58,714.37 A63,63,0,0,1,1220.07,777.96 A5,5,0,0,1,1218.72,770.72 L1224.14,763.49 A5,5,0,0,1,1230.72,762.20 A44,44,0,0,0,1296.93,718.12 A5,5,0,0,1,1300.66,712.55Z"/><path fill="#f19a34" d="M1216.35,768.84 A5,5,0,0,1,1208.98,769.18 A63,63,0,0,1,1192.74,707.50 A5,5,0,0,1,1199.31,704.17 L1207.77,707.35 A5,5,0,0,1,1210.85,713.30 A44,44,0,0,0,1221.89,755.21 A5,5,0,0,1,1222.14,761.90Z"/><path fill="#4dbb5b" d="M1200.45,701.37 A5,5,0,0,1,1198.06,694.39 A63,63,0,0,1,1244.69,662.10 A5,5,0,0,1,1250.38,666.80 L1250.85,675.82 A5,5,0,0,1,1246.63,681.02 A44,44,0,0,0,1215.09,702.86 A5,5,0,0,1,1208.73,704.98Z"/><line x1="1288.3" y1="677.3" x2="1302.7" y2="659.1" stroke="#9a9a9a" stroke-width="0.9" stroke-dasharray="2 2"/><line x1="1217.1" y1="669.7" x2="1207.3" y2="656" stroke="#9a9a9a" stroke-width="0.9" stroke-dasharray="2 2"/><line x1="1198.2" y1="737.9" x2="1174" y2="743.5" stroke="#9a9a9a" stroke-width="0.9" stroke-dasharray="2 2"/><line x1="1289" y1="778.8" x2="1299.7" y2="792.4" stroke="#9a9a9a" stroke-width="0.9" stroke-dasharray="2 2"/></svg>
<div class="a" style="left:1105.6px;width:100px;text-align:right;top:649.72px;font-size:11.2px;line-height:14px;color:#1c1c1c">Others (18.2%)</div>
<div class="a" style="left:1320.8px;top:651.42px;font-size:11.2px;line-height:15px;color:#1c1c1c;font-weight:400;letter-spacing:0px;">gpt-4o-mini (20.9%)</div>
<div class="a" style="left:1042.3px;top:737.92px;font-size:11.2px;line-height:15px;color:#1c1c1c;font-weight:400;letter-spacing:0px;">claude-3-5-sonnet (20.3%)</div>
<div class="a" style="left:1316.6px;top:787.32px;font-size:11.2px;line-height:15px;color:#1c1c1c;font-weight:400;letter-spacing:0px;">gemini-2.5-flash (40.5%)</div>
<svg class="a" style="left:1303.3px;top:652.4px" width="13" height="13" viewBox="0 0 24 24"><path fill="#1a1a1a" d="M22.2819 9.8211a5.9847 5.9847 0 0 0-.5157-4.9108 6.0462 6.0462 0 0 0-6.5098-2.9A6.0651 6.0651 0 0 0 4.9807 4.1818a5.9847 5.9847 0 0 0-3.9977 2.9 6.0462 6.0462 0 0 0 .7427 7.0966 5.98 5.98 0 0 0 .511 4.9107 6.051 6.051 0 0 0 6.5146 2.9001A5.9847 5.9847 0 0 0 13.2599 24a6.0557 6.0557 0 0 0 5.7718-4.2058 5.9894 5.9894 0 0 0 3.9977-2.9001 6.0557 6.0557 0 0 0-.7475-7.0729zm-9.022 12.6081a4.4755 4.4755 0 0 1-2.8764-1.0408l.1419-.0804 4.7783-2.7582a.7948.7948 0 0 0 .3927-.6813v-6.7369l2.02 1.1686a.071.071 0 0 1 .038.052v5.5826a4.504 4.504 0 0 1-4.4945 4.4944zm-9.6607-4.1254a4.4708 4.4708 0 0 1-.5346-3.0137l.142.0852 4.783 2.7582a.7712.7712 0 0 0 .7806 0l5.8428-3.3685v2.3324a.0804.0804 0 0 1-.0332.0615L9.74 19.9502a4.4992 4.4992 0 0 1-6.1408-1.6464zM2.3408 7.8956a4.485 4.485 0 0 1 2.3655-1.9728V11.6a.7664.7664 0 0 0 .3879.6765l5.8144 3.3543-2.0201 1.1685a.0757.0757 0 0 1-.071 0l-4.8303-2.7865A4.504 4.504 0 0 1 2.3408 7.872zm16.5963 3.8558L13.1038 8.364 15.1192 7.2a.0757.0757 0 0 1 .071 0l4.8303 2.7913a4.4944 4.4944 0 0 1-.6765 8.1042v-5.6772a.79.79 0 0 0-.407-.667zm2.0107-3.0231l-.142-.0852-4.7735-2.7818a.7759.7759 0 0 0-.7854 0L9.409 9.2297V6.8974a.0662.0662 0 0 1 .0284-.0615l4.8303-2.7866a4.4992 4.4992 0 0 1 6.6802 4.66zM8.3065 12.863l-2.02-1.1638a.0804.0804 0 0 1-.038-.0567V6.0742a4.4992 4.4992 0 0 1 7.3757-3.4537l-.142.0805L8.704 5.459a.7948.7948 0 0 0-.3927.6813zm1.0976-2.3654l2.602-1.4998 2.6069 1.4998v2.9994l-2.5974 1.4997-2.6067-1.4997Z"/></svg>
<svg class="a" style="left:1024.5px;top:738.4px" width="14" height="14" viewBox="0 0 24 24"><g stroke="#d9775a" stroke-width="2.1" stroke-linecap="round"><line x1="12" y1="12" x2="22.80" y2="12.00"/><line x1="12" y1="12" x2="19.97" y2="17.17"/><line x1="12" y1="12" x2="16.93" y2="21.27"/><line x1="12" y1="12" x2="11.15" y2="21.76"/><line x1="12" y1="12" x2="5.35" y2="20.51"/><line x1="12" y1="12" x2="3.28" y2="15.52"/><line x1="12" y1="12" x2="1.56" y2="10.16"/><line x1="12" y1="12" x2="4.72" y2="5.44"/><line x1="12" y1="12" x2="9.18" y2="1.47"/><line x1="12" y1="12" x2="15.28" y2="2.98"/><line x1="12" y1="12" x2="20.36" y2="6.15"/></g></svg>
<svg class="a" style="left:1298.2px;top:787.6px" width="14" height="14" viewBox="0 0 24 24"><defs><clipPath id="gc7946"><path d="M12 0.5 Q14.2 9.8 23.5 12 Q14.2 14.2 12 23.5 Q9.8 14.2 0.5 12 Q9.8 9.8 12 0.5 Z"/></clipPath><filter id="gf7946" x="-20%" y="-20%" width="140%" height="140%"><feGaussianBlur stdDeviation="1.6"/></filter></defs><g clip-path="url(#gc7946)"><rect width="24" height="24" fill="#3f83f0"/><g filter="url(#gf7946)"><path d="M12 -2 L4 6 L12 10 Z" fill="#e0485e"/><path d="M-2 12 L6 5 L10 12 L6 19 Z" fill="#f2b42a"/><path d="M12 26 L5 18 L12 14 L17 20 Z" fill="#2fae6e"/></g></g></svg>
<div class="a" style="left:954.5px;top:849.5px;width:598.3px;height:250.5px;border:1px solid #ececec;border-radius:10px;overflow:hidden"><div class="a" style="left:0;top:0;right:0;height:44.200000000000045px;background:#f7f7f7;border-bottom:1px solid #efefef"></div></div>
<div class="a" style="left:955.5px;top:937.3px;width:596.3px;height:1px;background:#efefef"></div>
<div class="a" style="left:955.5px;top:981.2px;width:596.3px;height:1px;background:#efefef"></div>
<div class="a" style="left:970.6px;top:864.04px;font-size:12px;line-height:16px;color:#8a8a8a;font-weight:400;letter-spacing:0.1px;">MODEL</div>
<div class="a" style="left:1164.7px;top:864.04px;font-size:12px;line-height:16px;color:#8a8a8a;font-weight:400;letter-spacing:0.1px;">TOTAL COSTS</div>
<div class="a" style="left:1294.2px;top:864.04px;font-size:12px;line-height:16px;color:#8a8a8a;font-weight:400;letter-spacing:0.1px;">$ PER ACTION</div>
<div class="a" style="left:1406.9px;top:864.04px;font-size:12px;line-height:16px;color:#8a8a8a;font-weight:400;letter-spacing:0.1px;">COST DISTRIBUTION</div>
<div class="a" style="left:970.6px;top:912.0px;width:7.6px;height:7.6px;border-radius:50%;background:#6450d8"></div>
<svg class="a" style="left:986.95px;top:908.15px" width="14.5" height="14.5" viewBox="0 0 24 24"><path fill="#1a1a1a" d="M22.2819 9.8211a5.9847 5.9847 0 0 0-.5157-4.9108 6.0462 6.0462 0 0 0-6.5098-2.9A6.0651 6.0651 0 0 0 4.9807 4.1818a5.9847 5.9847 0 0 0-3.9977 2.9 6.0462 6.0462 0 0 0 .7427 7.0966 5.98 5.98 0 0 0 .511 4.9107 6.051 6.051 0 0 0 6.5146 2.9001A5.9847 5.9847 0 0 0 13.2599 24a6.0557 6.0557 0 0 0 5.7718-4.2058 5.9894 5.9894 0 0 0 3.9977-2.9001 6.0557 6.0557 0 0 0-.7475-7.0729zm-9.022 12.6081a4.4755 4.4755 0 0 1-2.8764-1.0408l.1419-.0804 4.7783-2.7582a.7948.7948 0 0 0 .3927-.6813v-6.7369l2.02 1.1686a.071.071 0 0 1 .038.052v5.5826a4.504 4.504 0 0 1-4.4945 4.4944zm-9.6607-4.1254a4.4708 4.4708 0 0 1-.5346-3.0137l.142.0852 4.783 2.7582a.7712.7712 0 0 0 .7806 0l5.8428-3.3685v2.3324a.0804.0804 0 0 1-.0332.0615L9.74 19.9502a4.4992 4.4992 0 0 1-6.1408-1.6464zM2.3408 7.8956a4.485 4.485 0 0 1 2.3655-1.9728V11.6a.7664.7664 0 0 0 .3879.6765l5.8144 3.3543-2.0201 1.1685a.0757.0757 0 0 1-.071 0l-4.8303-2.7865A4.504 4.504 0 0 1 2.3408 7.872zm16.5963 3.8558L13.1038 8.364 15.1192 7.2a.0757.0757 0 0 1 .071 0l4.8303 2.7913a4.4944 4.4944 0 0 1-.6765 8.1042v-5.6772a.79.79 0 0 0-.407-.667zm2.0107-3.0231l-.142-.0852-4.7735-2.7818a.7759.7759 0 0 0-.7854 0L9.409 9.2297V6.8974a.0662.0662 0 0 1 .0284-.0615l4.8303-2.7866a4.4992 4.4992 0 0 1 6.6802 4.66zM8.3065 12.863l-2.02-1.1638a.0804.0804 0 0 1-.038-.0567V6.0742a4.4992 4.4992 0 0 1 7.3757-3.4537l-.142.0805L8.704 5.459a.7948.7948 0 0 0-.3927.6813zm1.0976-2.3654l2.602-1.4998 2.6069 1.4998v2.9994l-2.5974 1.4997-2.6067-1.4997Z"/></svg>
<div class="a" style="left:1009.8px;top:908.17px;font-size:12.2px;line-height:16px;color:#1c1c1c;font-weight:400;letter-spacing:0px;">gpt-4o-mini</div>
<div class="a" style="left:1164.7px;top:907.43px;font-size:12.9px;line-height:17px;color:#1c1c1c;font-weight:400;letter-spacing:0px;">$10,311.00</div>
<div class="a" style="left:1294.2px;top:907.43px;font-size:12.9px;line-height:17px;color:#1c1c1c;font-weight:400;letter-spacing:0px;">$0.82</div>
<div class="a" style="left:1406.9px;top:907.43px;font-size:12.9px;line-height:17px;color:#1c1c1c;font-weight:400;letter-spacing:0px;">20.9%</div>
<div class="a" style="left:970.6px;top:955.4000000000001px;width:7.6px;height:7.6px;border-radius:50%;background:#37c39f"></div>
<svg class="a" style="left:986.7px;top:952.0px" width="15" height="15" viewBox="0 0 24 24"><defs><clipPath id="gc9595"><path d="M12 0.5 Q14.2 9.8 23.5 12 Q14.2 14.2 12 23.5 Q9.8 14.2 0.5 12 Q9.8 9.8 12 0.5 Z"/></clipPath><filter id="gf9595" x="-20%" y="-20%" width="140%" height="140%"><feGaussianBlur stdDeviation="1.6"/></filter></defs><g clip-path="url(#gc9595)"><rect width="24" height="24" fill="#3f83f0"/><g filter="url(#gf9595)"><path d="M12 -2 L4 6 L12 10 Z" fill="#e0485e"/><path d="M-2 12 L6 5 L10 12 L6 19 Z" fill="#f2b42a"/><path d="M12 26 L5 18 L12 14 L17 20 Z" fill="#2fae6e"/></g></g></svg>
<div class="a" style="left:1009.8px;top:951.57px;font-size:12.2px;line-height:16px;color:#1c1c1c;font-weight:400;letter-spacing:0px;">gemini-2.5-flash</div>
<div class="a" style="left:1164.7px;top:950.83px;font-size:12.9px;line-height:17px;color:#1c1c1c;font-weight:400;letter-spacing:0px;">$20,000.00</div>
<div class="a" style="left:1294.2px;top:950.83px;font-size:12.9px;line-height:17px;color:#1c1c1c;font-weight:400;letter-spacing:0px;">$2.25</div>
<div class="a" style="left:1406.9px;top:950.83px;font-size:12.9px;line-height:17px;color:#1c1c1c;font-weight:400;letter-spacing:0px;">40.5%</div>
<!-- SIDEBAR -->
<svg class="a" style="left:19.5px;top:19px" width="21" height="21" viewBox="0 0 20 20"><path fill="#654fdb" d="M8 0.3 L13.4 5.3 L19.6 0.4 L19.6 14 Q19.6 18.2 16 19.6 L11.5 20.4 Q9.4 20.8 8.2 19.2 L6.4 16.6 L3.2 17.2 Q0 14.5 0 9 Q0 1.2 8 0.3 Z"/><path fill="#fff" d="M9.4 5.8 Q10 9.4 13.2 10 Q10 10.6 9.4 14.2 Q8.8 10.6 5.6 10 Q8.8 9.4 9.4 5.8 Z"/></svg>
<div class="a" style="left:48.5px;top:18px;font-size:19px;font-weight:700;letter-spacing:-0.3px;line-height:22px;color:#0d0d0d">Fenra</div>

<div class="a" style="left:14.5px;top:60.5px;width:226px;height:32px;background:#ededfa;border-radius:9px"></div>

<!-- nav items -->
<svg class="i" style="left:21.6px;top:69px;stroke:#5a4db8;stroke-width:2.2" width="16.3" height="16.3" viewBox="0 0 24 24"><rect x="3" y="3" width="7" height="9" rx="1"/><rect x="14" y="3" width="7" height="5" rx="1"/><rect x="14" y="12" width="7" height="9" rx="1"/><rect x="3" y="16" width="7" height="5" rx="1"/></svg>
<div class="nav" style="top:69.6px;color:#5748b5">Overview</div>

<svg class="i" style="left:22px;top:105px" width="15" height="15" viewBox="0 0 15 15"><circle cx="6.3" cy="6.3" r="5.2"/><path d="M10.2 10.2 L13.6 13.6"/><path d="M7.8 4.3 Q7.2 3.6 6.2 3.6 Q4.6 3.6 4.6 4.9 Q4.6 5.9 6.3 6.3 Q8 6.7 8 7.8 Q8 9.1 6.3 9.1 Q5.2 9.1 4.6 8.3 M6.3 2.6 V3.6 M6.3 9.1 V10"/></svg>
<div class="nav" style="top:104.7px">Cost Explorer</div>
<svg class="i" style="left:218px;top:108px;stroke-width:1.7" width="11" height="8" viewBox="0 0 11 8"><path d="M1.5 1.8 L5.5 5.8 L9.5 1.8"/></svg>
<div class="a" style="left:29px;top:127px;width:1px;height:65px;background:#e2e2e2"></div>
<div class="nav" style="top:136.5px;left:47px">Breakdown</div>
<div class="nav" style="top:167.8px;left:47px">Activity</div>

<svg class="i" style="left:22.5px;top:205px;stroke-width:1.5" width="14" height="14" viewBox="0 0 14 14"><rect x="1.2" y="1.2" width="4.6" height="4.6" rx="0.8"/><rect x="8.2" y="1.2" width="4.6" height="4.6" rx="0.8"/><rect x="1.2" y="8.2" width="4.6" height="4.6" rx="0.8"/><path d="M10.5 8 V13 M8 10.5 H13"/></svg>
<div class="nav" style="top:203.5px">Custom Dashboards</div>

<svg class="i" style="left:23px;top:240.5px;stroke-width:1.5" width="13" height="15" viewBox="0 0 13 15"><path d="M8 1 H3 Q1.5 1 1.5 2.5 V12.5 Q1.5 14 3 14 H10 Q11.5 14 11.5 12.5 V4.5 Z M8 1 V4.5 H11.5"/><path d="M4 8 H9 M4 10.8 H9"/></svg>
<div class="nav" style="top:239.9px">Reports</div>

<svg class="i" style="left:22.5px;top:276px;stroke-width:1.5" width="14" height="15" viewBox="0 0 14 15"><path d="M3 5.8 Q3 2 7 1.6 Q11 2 11 5.8 V9 L12.5 11.2 H1.5 L3 9 Z"/><path d="M5.5 13.2 Q7 14.6 8.5 13.2"/></svg>
<div class="nav" style="top:275.3px">Alerts</div>

<div class="a" style="left:21.8px;top:331px;font-size:11.3px;line-height:15px;color:#717171">Organization</div>

<svg class="i" style="left:22.5px;top:363.5px;stroke-width:1.5" width="14" height="14" viewBox="0 0 14 14"><circle cx="9" cy="5" r="3.6"/><path d="M6.4 7.6 L1.6 12.4 M3.2 10.8 L4.6 12.2 M4.6 9.4 L5.8 10.6"/></svg>
<div class="nav" style="top:362.6px">API Keys</div>

<svg class="i" style="left:22.5px;top:399px;stroke-width:1.5" width="15" height="14" viewBox="0 0 15 14"><circle cx="5.5" cy="4" r="2.9"/><path d="M1 13 V12 Q1 8.8 5.5 8.8 Q10 8.8 10 12 V13"/><path d="M9.5 1.4 Q11.8 2 11.8 4 Q11.8 6 9.5 6.6 M11.6 9 Q14 9.8 14 12 V13"/></svg>
<div class="nav" style="top:398px">Team</div>

<svg class="i" style="left:22.5px;top:434.5px;stroke-width:1.5" width="14" height="14" viewBox="0 0 14 14"><circle cx="7" cy="7" r="2"/><path d="M5.8 1.2 H8.2 L8.6 2.8 L10 3.6 L11.6 3.1 L12.8 5.1 L11.6 6.3 V7.7 L12.8 8.9 L11.6 10.9 L10 10.4 L8.6 11.2 L8.2 12.8 H5.8 L5.4 11.2 L4 10.4 L2.4 10.9 L1.2 8.9 L2.4 7.7 V6.3 L1.2 5.1 L2.4 3.1 L4 3.6 L5.4 2.8 Z"/></svg>
<div class="nav" style="top:433.8px">Settings</div>

<svg class="i" style="left:22.5px;top:471px;stroke-width:1.5" width="14" height="13" viewBox="0 0 14 13"><rect x="1" y="1.5" width="12" height="10" rx="2"/><path d="M1 4.8 H13 M3.6 8.6 H5.4"/></svg>
<div class="nav" style="top:469.6px">Billing</div>

<svg class="i" style="left:22.5px;top:901.5px;stroke-width:1.5" width="14" height="14" viewBox="0 0 14 14"><circle cx="7" cy="7" r="6"/><path d="M5.2 5.3 Q5.2 3.6 7 3.6 Q8.8 3.6 8.8 5.2 Q8.8 6.3 7.6 6.9 Q7 7.2 7 8.3"/><circle cx="7" cy="10.3" r="0.3" fill="#1f1f1f"/></svg>
<div class="nav" style="top:900.5px">Get Help</div>
<div class="a" style="left:6px;top:933px;width:242px;height:1px;background:#e4e4e4"></div>
<svg class="i" style="left:22.5px;top:950px;stroke-width:1.5" width="14" height="14" viewBox="0 0 14 14"><circle cx="7" cy="7" r="6"/><circle cx="7" cy="5.8" r="2.2"/><path d="M3.2 11.4 Q4.5 9.4 7 9.4 Q9.5 9.4 10.8 11.4"/></svg>
<div class="nav" style="top:949.3px">Profile</div>
<svg class="i" style="left:219px;top:952px;stroke-width:1.4" width="11" height="11" viewBox="0 0 11 11"><path d="M1.5 1.5 V9.5 M8.5 1.8 L4.8 5.5 L8.5 9.2"/></svg>
<div class="a" style="left:256px;top:950px;width:1344px;height:38.5px;background:linear-gradient(rgba(0,0,0,0),rgba(0,0,0,.055))"></div>
<div class="a" style="left:0;top:988.6px;width:1600px;height:1.4px;background:#262626"></div>
</body></html>
